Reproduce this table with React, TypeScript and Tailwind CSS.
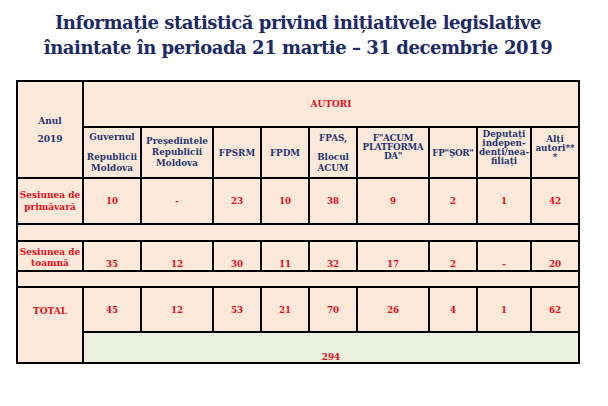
import React from "react";

const cell = "bg-[#fde9d9] flex flex-col items-center text-center";
const navy = "text-[#1f3574]";
const red = "text-[#e8101c]";

export default function App() {
  const spring = ["10", "-", "23", "10", "38", "9", "2", "1", "42"];
  const autumn = ["35", "12", "30", "11", "32", "17", "2", "-", "20"];
  const total = ["45", "12", "53", "21", "70", "26", "4", "1", "62"];
  return (
    <div
      className="w-[608px] h-[406px] bg-white overflow-hidden"
      style={{ fontFamily: '"DejaVu Serif", "Liberation Serif", serif' }}
    >
      <div className="pt-[10px] text-center text-[#1c2a66] font-bold text-[18px] leading-[25px] tracking-[-0.45px] whitespace-nowrap ml-[16px] w-[564px]">
        <div>Informație statistică privind inițiativele legislative</div>
        <div>înaintate în perioada 21 martie – 31 decembrie 2019</div>
      </div>
      <div
        className="mt-[20px] ml-[16px] w-[564px] bg-black p-[2px] gap-[2px] grid font-bold text-[8.8px] leading-[10px]"
        style={{
          gridTemplateColumns: "64px 56px 70px 46px 46px 46px 70px 46px 52px 46px",
          gridTemplateRows: "44px 49px 44px 15px 28px 14px 43px 29px",
        }}
      >
        {/* Header row 1 */}
        <div className={`${cell} ${navy} row-span-2 justify-center leading-[18px] text-[9px]`}>
          <div>Anul</div>
          <div>2019</div>
        </div>
        <div className={`${cell} ${red} col-span-9 justify-center text-[9px]`}>AUTORI</div>

        {/* Header row 2 */}
        <div className={`${cell} ${navy} pt-[4px]`}>
          <div className="mb-[10px]">Guvernul</div>
          <div className="leading-[11px]">Republicii</div>
          <div className="leading-[11px]">Moldova</div>
        </div>
        <div className={`${cell} ${navy} justify-center leading-[11px]`}>
          <div>Președintele</div>
          <div>Republicii</div>
          <div>Moldova</div>
        </div>
        <div className={`${cell} ${navy} justify-center`}>FPSRM</div>
        <div className={`${cell} ${navy} justify-center`}>FPDM</div>
        <div className={`${cell} ${navy} pt-[5px]`}>
          <div className="mb-[9px]">FPAS,</div>
          <div className="leading-[11px]">Blocul</div>
          <div className="leading-[11px]">ACUM</div>
        </div>
        <div className={`${cell} ${navy} pt-[6px] leading-[9px] tracking-[-0.3px]`}>
          <div>F"ACUM</div>
          <div>PLATFORMA</div>
          <div>DA"</div>
        </div>
        <div className={`${cell} ${navy} justify-center tracking-[-0.3px]`}>FP"ȘOR"</div>
        <div className={`${cell} ${navy} pt-[2px] leading-[9px]`}>
          <div>Deputați</div>
          <div>indepen-</div>
          <div>denți/nea-</div>
          <div>filiați</div>
        </div>
        <div className={`${cell} ${navy} pt-[7px] leading-[9px]`}>
          <div>Alți</div>
          <div>autori**</div>
          <div>*</div>
        </div>

        {/* Spring row */}
        <div className={`${cell} ${red} justify-center leading-[12px] text-[9px]`}>
          <div>Sesiunea de</div>
          <div>primăvară</div>
        </div>
        {spring.map((v, i) => (
          <div key={`s${i}`} className={`${cell} ${red} justify-center`}>{v}</div>
        ))}

        <div className="bg-[#fde9d9] col-span-10" />

        {/* Autumn row */}
        <div className={`${cell} ${red} pt-[5px] leading-[11px] text-[9px]`}>
          <div>Sesiunea de</div>
          <div>toamnă</div>
        </div>
        {autumn.map((v, i) => (
          <div key={`a${i}`} className={`${cell} ${red} justify-end pb-[1px]`}>{v}</div>
        ))}

        <div className="bg-[#fde9d9] col-span-10" />

        {/* Total row */}
        <div className={`${cell} ${red} row-span-2 pt-[18px] text-[9px]`}>TOTAL</div>
        {total.map((v, i) => (
          <div key={`t${i}`} className={`${cell} ${red} justify-center`}>{v}</div>
        ))}
        <div className={`bg-[#ebf1de] col-span-9 flex flex-col items-center justify-end ${red}`}>294</div>
      </div>
    </div>
  );
}
